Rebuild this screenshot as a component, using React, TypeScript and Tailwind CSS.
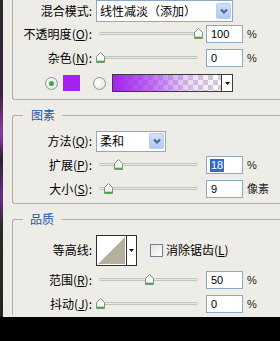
import React from "react";

const thumbs = { opacity: 198, noise: 100, spread: 118, size: 108, range: 149, jitter: 100 };

const Label = ({ text, k }: { text: string; k?: string }) => (
  <span className="w-[79px] shrink-0 text-right text-[12px] leading-[14px] text-black">
    {text}
    {k && (
      <>
        (<span className="underline">{k}</span>)
      </>
    )}
    :
  </span>
);

const Thumb = ({ left }: { left: number }) => (
  <svg className="absolute top-[6px]" style={{ left }} width="9" height="11" viewBox="0 0 9 11">
    <path d="M0.5 10.5V4.5L4.5 0.5L8.5 4.5V10.5Z" fill="#f6f6f2" stroke="#8c8c84" />
    <path d="M1 9.5H8" stroke="#3db045" strokeWidth="1.6" />
  </svg>
);

// track runs x 99..198 in page coords, container starts at x 95
const Slider = ({ at }: { at: number }) => (
  <div className="relative ml-[3px] h-[24px] w-[110px] shrink-0">
    <div className="absolute left-[4px] top-[10px] h-[3px] w-[99px] rounded-full border border-[#c4c3bb] bg-[#e9e8e3]" />
    <Thumb left={at - 95 - 4.5} />
  </div>
);

const Num = ({ v, sel }: { v: string; sel?: boolean }) => (
  <div className="ml-px flex h-[18px] w-[37px] shrink-0 items-center border border-[#8fa8c2] bg-white pl-[3px] font-['Liberation_Sans',sans-serif] text-[11px] leading-[13px] text-black">
    {sel ? <span className="bg-[#316ac5] px-px text-white">{v}</span> : <span className="pl-px">{v}</span>}
  </div>
);

const Unit = ({ t }: { t: string }) => (
  <span className="ml-[4px] font-['Liberation_Sans','Noto_Sans_CJK_SC',sans-serif] text-[11px] leading-[13px] text-[#222]">{t}</span>
);

const SliderRow = ({ label, k, at, v, unit, sel }: { label: string; k: string; at: number; v: string; unit: string; sel?: boolean }) => (
  <div className="flex h-[24px] items-center">
    <Label text={label} k={k} />
    <Slider at={at} />
    <Num v={v} sel={sel} />
    <Unit t={unit} />
  </div>
);

const DropBtn = () => (
  <div className="flex h-[16px] w-[15px] shrink-0 items-center justify-center rounded-[2px] border border-[#b9cbf3] bg-[linear-gradient(to_bottom,#d3e0fd,#b3c7f5)]">
    <svg width="8" height="6" viewBox="0 0 8 6">
      <path d="M1 1.5L4 4.5L7 1.5" fill="none" stroke="#4d6185" strokeWidth="2" />
    </svg>
  </div>
);

const Select = ({ text, w, h }: { text: string; w: string; h: string }) => (
  <div className={`ml-[4px] flex items-center border border-[#8fa8c2] bg-white pl-[3px] pr-px ${w} ${h}`}>
    <span className="flex-1 text-[12px] leading-[14px] text-black">{text}</span>
    <DropBtn />
  </div>
);

const Radio = ({ on, cls }: { on?: boolean; cls: string }) => (
  <div className={`flex h-[13px] w-[13px] shrink-0 items-center justify-center rounded-full border border-[#8a97a3] bg-[radial-gradient(circle_at_40%_40%,#ffffff,#dedfd8)] ${cls}`}>
    {on && <div className="h-[5px] w-[5px] rounded-full bg-[#3aa83f]" />}
  </div>
);

const Arrow = () => (
  <svg width="5" height="3" viewBox="0 0 5 3">
    <path d="M0 0H5L2.5 3Z" fill="#111" />
  </svg>
);

export default function App() {
  return (
    <div className="flex h-[341px] w-[280px] items-start overflow-hidden bg-black font-['Noto_Sans_CJK_SC','Noto_Sans',sans-serif]">
      <div className="h-[317px] w-[3px] shrink-0 bg-[linear-gradient(to_bottom,#2a2a2a_0%,#3b2340_30%,#8e3aa8_42%,#2a2230_50%,#6b2c86_62%,#2a2a2a_72%,#222_100%)]" />
      <div className="flex h-[317px] flex-1 flex-col overflow-hidden bg-[#edece7] pl-[9px]">
        {/* 结构 (cut off at top) */}
        <div className="h-[100px] shrink-0 rounded-bl-[3px] border-b border-l border-[#b2b1a8]">
          <div className="flex h-[22px] items-center">
            <Label text="混合模式" />
            <Select text="线性减淡（添加）" w="w-[137px]" h="h-[22px]" />
          </div>
          <SliderRow label="不透明度" k="O" at={thumbs.opacity} v="100" unit="%" />
          <SliderRow label="杂色" k="N" at={thumbs.noise} v="0" unit="%" />
          <div className="flex h-[26px] items-center">
            <Radio on cls="ml-[32px]" />
            <div className="ml-[5px] h-[16px] w-[17px] bg-[#a322ef]" />
            <Radio cls="ml-[13px]" />
            <div className="ml-[6px] flex h-[18px] w-[121px] border border-[#3a3a3a] bg-[repeating-conic-gradient(#cfcfcf_0%_25%,#ffffff_0%_50%)] bg-[length:10px_10px]">
              <div className="flex-1 bg-[linear-gradient(to_right,#a322ef_0%,rgba(170,60,240,0.75)_35%,rgba(200,140,245,0.35)_70%,rgba(255,255,255,0)_100%)]" />
              <div className="flex w-[11px] items-center justify-center border-l border-[#3a3a3a] bg-white">
                <Arrow />
              </div>
            </div>
          </div>
        </div>

        <fieldset className="mt-[7px] shrink-0 rounded-l-[3px] border-b border-l border-t border-[#b2b1a8] pb-[2px]">
          <legend className="ml-[10px] pl-[8px] pr-[7px] text-[12px] leading-[16px] text-[#2157ab]">图素</legend>
          <div className="pt-[6px]">
            <div className="flex h-[24px] items-center">
              <Label text="方法" k="Q" />
              <Select text="柔和" w="w-[70px]" h="h-[21px]" />
            </div>
            <SliderRow label="扩展" k="P" at={thumbs.spread} v="18" unit="%" sel />
            <SliderRow label="大小" k="S" at={thumbs.size} v="9" unit="像素" />
          </div>
        </fieldset>

        <fieldset className="mt-[7px] shrink-0 rounded-l-[3px] border-l border-t border-[#b2b1a8]">
          <legend className="ml-[10px] pl-[7px] pr-[7px] text-[12px] leading-[16px] text-[#2157ab]">品质</legend>
          <div className="pt-[5px]">
            <div className="flex h-[36px] items-center">
              <Label text="等高线" />
              <div className="ml-[4px] flex h-[31px] w-[41px] border border-[#2e2e2e] bg-white">
                <svg width="29" height="29" viewBox="0 0 29 29" className="shrink-0">
                  <path d="M1 28L28 1V28Z" fill="#b5af9d" />
                </svg>
                <div className="flex flex-1 items-center justify-center border-l border-[#2e2e2e]">
                  <Arrow />
                </div>
              </div>
              <div className="ml-[13px] h-[13px] w-[13px] shrink-0 border border-[#6f8193] bg-[linear-gradient(135deg,#e4e3dc,#ffffff)]" />
              <span className="ml-[3px] text-[12px] leading-[14px] text-black">
                消除锯齿(<span className="underline">L</span>)
              </span>
            </div>
            <SliderRow label="范围" k="R" at={thumbs.range} v="50" unit="%" />
            <SliderRow label="抖动" k="J" at={thumbs.jitter} v="0" unit="%" />
          </div>
        </fieldset>
      </div>
    </div>
  );
}
